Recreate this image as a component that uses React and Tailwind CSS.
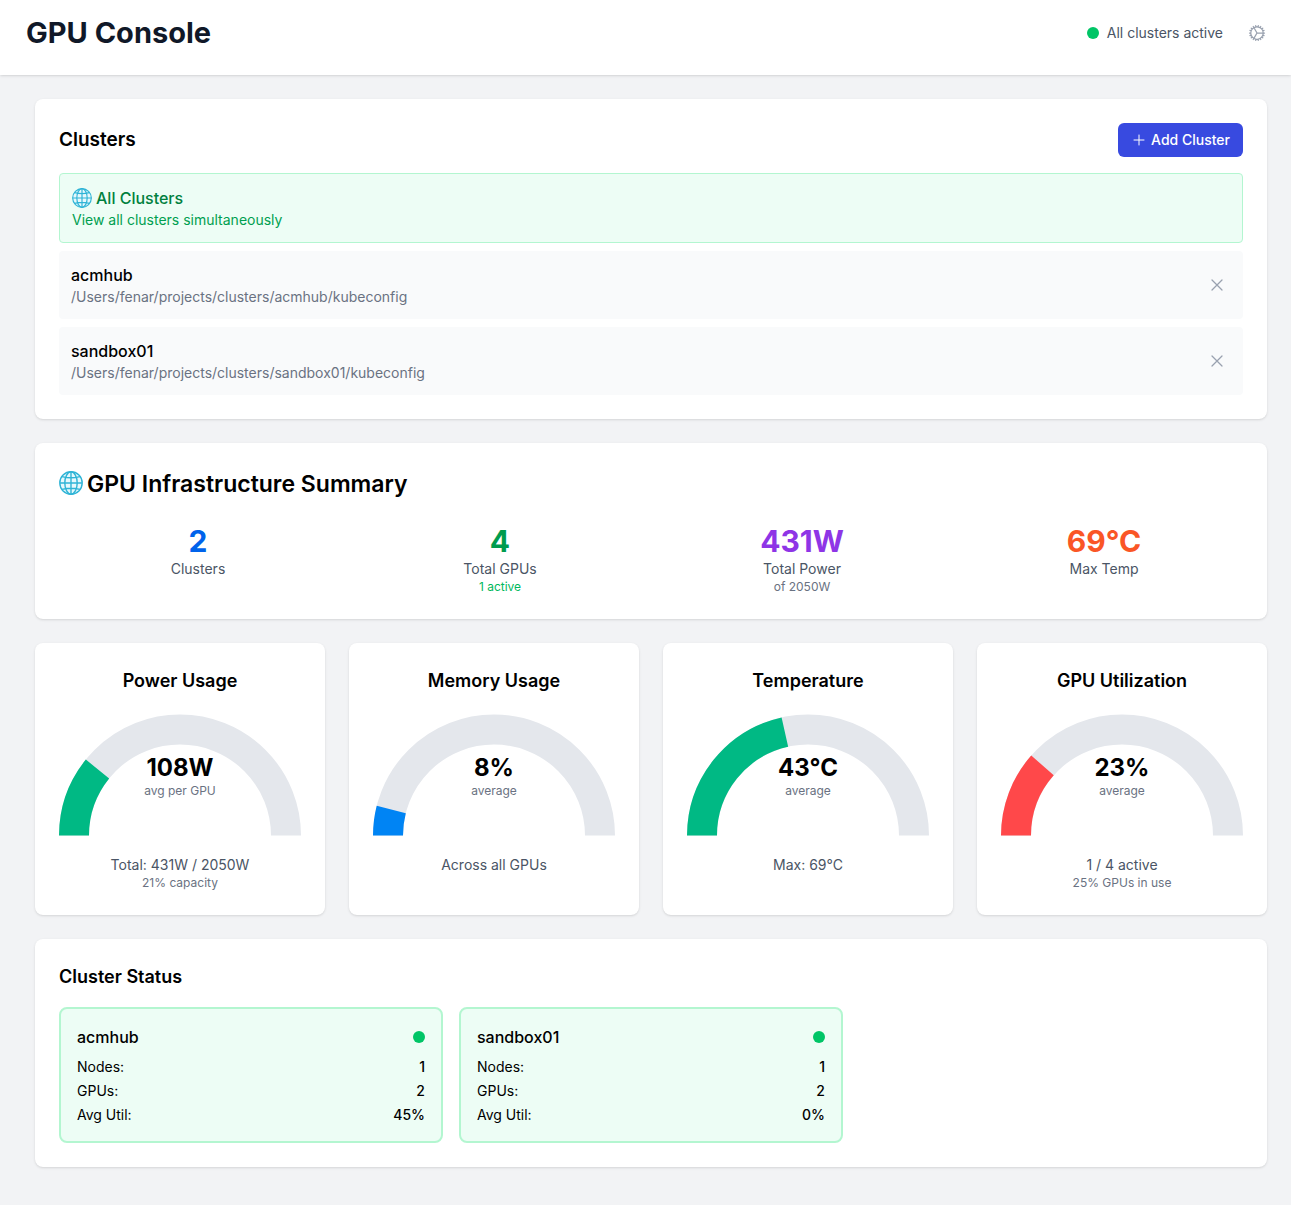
import { HiOutlineCog, HiOutlinePlus, HiOutlineXMark } from "react-icons/hi2";

const clusters = [
  { name: "acmhub", path: "/Users/fenar/projects/clusters/acmhub/kubeconfig", nodes: "1", gpus: "2", util: "45%" },
  { name: "sandbox01", path: "/Users/fenar/projects/clusters/sandbox01/kubeconfig", nodes: "1", gpus: "2", util: "0%" },
];

const stats = [
  { value: "2", label: "Clusters", color: "text-[#0063eb]" },
  { value: "4", label: "Total GPUs", color: "text-[#009c4e]", note: "1 active", noteColor: "text-[#00b85c]" },
  { value: "431W", label: "Total Power", color: "text-[#8e35e6]", note: "of 2050W", noteColor: "text-[#6a7282]" },
  { value: "69°C", label: "Max Temp", color: "text-[#fa5626]" },
];

const gauges = [
  { title: "Power Usage", value: "108W", sub: "avg per GPU", percent: 21.6, color: "#00b984", line: "Total: 431W / 2050W", note: "21% capacity" },
  { title: "Memory Usage", value: "8%", sub: "average", percent: 7.9, color: "#0084f4", line: "Across all GPUs" },
  { title: "Temperature", value: "43°C", sub: "average", percent: 43, color: "#00b984", line: "Max: 69°C" },
  { title: "GPU Utilization", value: "23%", sub: "average", percent: 23, color: "#ff484a", line: "1 / 4 active", note: "25% GPUs in use" },
];

function Globe({ className }) {
  return (
    <svg viewBox="0 0 24 24" fill="none" aria-hidden="true" className={className}>
      <circle cx="12" cy="12" r="11.2" fill="#e6f8fc" stroke="#2fb4d6" strokeWidth="1.4" />
      <g stroke="#2fb4d6" strokeWidth="1.4">
        <ellipse cx="12" cy="12" rx="6.2" ry="11.2" />
        <path d="M12 1v22M1 12h22M3.2 5.6Q12 8 20.8 5.6M3.2 18.4Q12 16 20.8 18.4" />
      </g>
    </svg>
  );
}

function Gauge({ percent, color }) {
  const angle = Math.PI * (1 - percent / 100);
  const x = 121 + 106 * Math.cos(angle);
  const y = 124.5 - 106 * Math.sin(angle);
  return (
    <svg viewBox="0 0 242 136" fill="none" strokeWidth="30" aria-hidden="true" className="block w-full">
      <path d="M15 124.5A106 106 0 0 1 227 124.5" stroke="#e4e7ec" />
      <path d={`M15 124.5A106 106 0 0 1 ${x} ${y}`} stroke={color} />
    </svg>
  );
}

function Card({ children, className = "" }) {
  return <section className={`rounded-lg bg-white p-6 shadow-sm ${className}`}>{children}</section>;
}

function StatusRow({ label, value }) {
  return (
    <div className="flex justify-between">
      <dt>{label}</dt>
      <dd className="font-medium">{value}</dd>
    </div>
  );
}

export default function App() {
  return (
    <div className="min-h-screen bg-[#f2f3f5] font-['Inter',sans-serif] text-black">
      <header className="flex items-center justify-between bg-white pt-4 pr-6 pb-[25px] pl-[26px] shadow-sm">
        <h1 className="text-[29px] leading-[34px] font-bold text-[#101828]">GPU Console</h1>
        <div className="flex items-center gap-6">
          <div className="flex items-center gap-2">
            <span className="size-3 rounded-full bg-[#00c566]" />
            <span className="text-sm text-[#4a5565]">All clusters active</span>
          </div>
          <button type="button" aria-label="Settings" className="text-[#99a1af]">
            <HiOutlineCog className="size-5" />
          </button>
        </div>
      </header>

      <main className="flex flex-col gap-6 py-6 pr-6 pl-[35px]">
        <Card>
          <div className="mb-4 flex items-center justify-between">
            <h2 className="text-[19px] leading-7 font-semibold">Clusters</h2>
            <button type="button" className="flex items-center gap-1 rounded-md border border-transparent bg-[#384ae0] px-3 py-2 text-sm leading-4 font-medium text-white">
              <HiOutlinePlus className="size-4" />
              Add Cluster
            </button>
          </div>
          <div className="flex flex-col gap-2">
            <button type="button" className="rounded-sm border border-[#b3f6d0] bg-[#edfdf5] p-3 text-left">
              <span className="flex items-center gap-1 font-medium text-[#00803e]">
                <Globe className="size-5" />
                All Clusters
              </span>
              <span className="block text-sm text-[#009f50]">View all clusters simultaneously</span>
            </button>
            {clusters.map((c) => (
              <div key={c.name} className="flex items-center justify-between rounded-sm bg-[#f9fafb] p-3">
                <button type="button" className="flex-1 text-left">
                  <span className="block font-medium">{c.name}</span>
                  <span className="block text-sm text-[#6a7282]">{c.path}</span>
                </button>
                <button type="button" aria-label={`Remove ${c.name}`} className="px-1 text-[#99a1af]">
                  <HiOutlineXMark className="size-5" />
                </button>
              </div>
            ))}
          </div>
        </Card>

        <Card>
          <h2 className="mb-6 flex h-8 items-center gap-1 text-[23px] font-semibold">
            <Globe className="size-6" />
            <span className="pt-0.5">GPU Infrastructure Summary</span>
          </h2>
          <div className="grid grid-cols-4 gap-6 text-center">
            {stats.map((s) => (
              <div key={s.label}>
                <div className={`text-3xl font-bold ${s.color}`}>{s.value}</div>
                <div className="text-sm text-[#4a5565]">{s.label}</div>
                {s.note && <div className={`text-xs ${s.noteColor}`}>{s.note}</div>}
              </div>
            ))}
          </div>
        </Card>

        <div className="grid grid-cols-4 gap-6">
          {gauges.map((g) => (
            <Card key={g.title} className="text-center">
              <h3 className="mb-4 text-lg font-semibold">{g.title}</h3>
              <div className="relative">
                <Gauge percent={g.percent} color={g.color} />
                <div className="absolute inset-x-0 top-[41px]">
                  <div className="text-2xl font-bold">{g.value}</div>
                  <div className="text-xs leading-[14px] text-[#6a7282]">{g.sub}</div>
                </div>
              </div>
              <p className="mt-2 text-sm text-[#4a5565]">{g.line}</p>
              {g.note && <p className="text-xs text-[#6a7282]">{g.note}</p>}
            </Card>
          ))}
        </div>

        <Card>
          <h3 className="mb-4 text-lg font-semibold">Cluster Status</h3>
          <div className="grid grid-cols-3 gap-4">
            {clusters.map((c) => (
              <article key={c.name} className="rounded-lg border-2 border-[#b3f6d0] bg-[#edfdf5] p-4">
                <div className="mb-2 flex items-center justify-between">
                  <h4 className="font-medium">{c.name}</h4>
                  <span className="size-3 rounded-full bg-[#00c566]" />
                </div>
                <dl className="flex flex-col gap-1 text-sm">
                  <StatusRow label="Nodes:" value={c.nodes} />
                  <StatusRow label="GPUs:" value={c.gpus} />
                  <StatusRow label="Avg Util:" value={c.util} />
                </dl>
              </article>
            ))}
          </div>
        </Card>
      </main>
    </div>
  );
}
